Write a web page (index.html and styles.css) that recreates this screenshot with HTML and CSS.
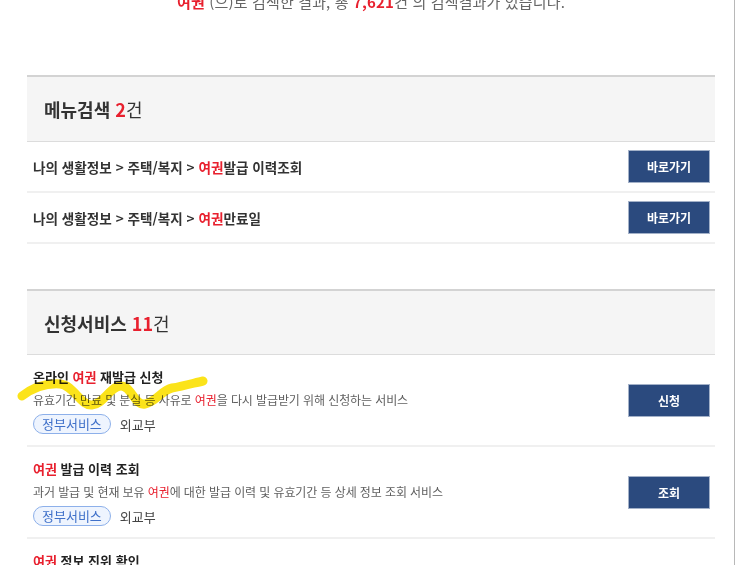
FILE: index.html
```html
<!DOCTYPE html>
<html lang="ko">
<head>
<meta charset="utf-8">
<title>검색결과</title>
<link rel="stylesheet" href="styles.css">
</head>
<body>
<div class="page">
  <div class="content">
    <p class="summary"><strong class="kw">여권</strong> (으)로 검색한 결과, 총 <strong class="kw">7,621</strong>건 의 검색결과가 있습니다.</p>

    <section class="result result-menu">
      <h2 class="result-head">메뉴검색 <em class="count">2</em><span class="unit">건</span></h2>
      <ul class="menu-list">
        <li class="menu-row">
          <span class="path">나의 생활정보 &gt; 주택/복지 &gt; <span class="kw-soft">여권</span>발급 이력조회</span>
          <a class="btn" href="#">바로가기</a>
        </li>
        <li class="menu-row">
          <span class="path">나의 생활정보 &gt; 주택/복지 &gt; <span class="kw-soft">여권</span>만료일</span>
          <a class="btn" href="#">바로가기</a>
        </li>
      </ul>
    </section>

    <section class="result result-svc">
      <h2 class="result-head">신청서비스 <em class="count">11</em><span class="unit">건</span></h2>
      <ul class="svc-list">
        <li class="svc-item">
          <div class="svc-body">
            <p class="svc-title">온라인 <span class="kw">여권</span> 재발급 신청</p>
            <p class="svc-desc">유효기간 만료 및 분실 등 사유로 <span class="kw-soft">여권</span>을 다시 발급받기 위해 신청하는 서비스</p>
            <div class="svc-meta"><span class="tag">정부서비스</span><span class="org">외교부</span></div>
          </div>
          <a class="btn" href="#">신청</a>
          <svg class="scribble" width="240" height="70" viewBox="0 0 240 70" aria-hidden="true">
            <path d="M22,41 C34,32 46,28 60,29 C74,30 80,51 92,50 C104,49 110,31 121,31 C132,31 134,51 145,49 C156,47 162,35 172,33 C184,31 194,28 203,26" fill="none" stroke="#fbe31a" stroke-width="9" stroke-linecap="round" stroke-linejoin="round"/>
          </svg>
        </li>
        <li class="svc-item">
          <div class="svc-body">
            <p class="svc-title"><span class="kw">여권</span> 발급 이력 조회</p>
            <p class="svc-desc">과거 발급 및 현재 보유 <span class="kw-soft">여권</span>에 대한 발급 이력 및 유효기간 등 상세 정보 조회 서비스</p>
            <div class="svc-meta"><span class="tag">정부서비스</span><span class="org">외교부</span></div>
          </div>
          <a class="btn" href="#">조회</a>
        </li>
        <li class="svc-item">
          <div class="svc-body">
            <p class="svc-title"><span class="kw">여권</span> 정보 진위 확인</p>
            <p class="svc-desc"><span class="kw-soft">여권</span> 정보의 진위 여부를 확인하는 서비스</p>
            <div class="svc-meta"><span class="tag">정부서비스</span><span class="org">외교부</span></div>
          </div>
          <a class="btn" href="#">확인</a>
        </li>
      </ul>
    </section>
  </div>
</div>
</body>
</html>
```
FILE: styles.css
```css
html, body {
  margin: 0;
  padding: 0;
  background: #fff;
}

body {
  font-family: "Noto Sans CJK KR", "Noto Sans", sans-serif;
  color: #333;
  overflow: hidden;
}

.page {
  box-sizing: border-box;
  width: 735px;
  min-height: 565px;
  border-right: 1px solid #b8b8b8;
}

.content {
  width: 688px;
  margin-left: 27px;
}

.summary {
  margin: -8px 0 0;
  height: 20px;
  line-height: 20px;
  font-size: 15px;
  letter-spacing: 0.15px;
  color: #666;
  text-align: center;
}

.kw {
  color: #e8202e;
  font-weight: 700;
}

.kw-soft {
  color: #e8202e;
}

.result {
  margin-top: 45px;
}

.result-menu {
  margin-top: 63px;
}

.result-head {
  margin: 0;
  display: flex;
  align-items: center;
  height: 64px;
  padding-left: 17px;
  background: #f5f5f5;
  border-top: 2px solid #d3d3d3;
  border-bottom: 1px solid #dcdcdc;
  font-size: 18px;
  font-weight: 700;
  color: #333;
}

.result-svc .result-head {
  height: 63px;
}

.count {
  font-style: normal;
  color: #e8202e;
  margin-left: 5px;
}

.unit {
  font-weight: 400;
}

.menu-list,
.svc-list {
  list-style: none;
  margin: 0;
  padding: 0;
}

.menu-row {
  display: flex;
  align-items: center;
  justify-content: space-between;
  padding: 8px 5px 8px 6px;
  border-bottom: 2px solid #f0f0f0;
}

.path {
  font-size: 13.6px;
  font-weight: 700;
  color: #333;
}

.btn {
  box-sizing: border-box;
  flex: none;
  width: 82px;
  height: 33px;
  display: flex;
  align-items: center;
  justify-content: center;
  background: #2b4a7e;
  border: 1px solid #a3b1c8;
  color: #fff;
  font-size: 12px;
  font-weight: 700;
  text-decoration: none;
}

.svc-item {
  position: relative;
  display: flex;
  align-items: center;
  justify-content: space-between;
  padding: 11px 5px 11px 6px;
  border-bottom: 2px solid #f0f0f0;
}

.svc-title {
  margin: 0;
  font-size: 13px;
  line-height: 22px;
  font-weight: 700;
  color: #222;
}

.svc-desc {
  margin: 1px 0 0;
  font-size: 12px;
  line-height: 22px;
  color: #5f5f5f;
  letter-spacing: -0.1px;
}

.svc-meta {
  margin-top: 3px;
  display: flex;
  align-items: center;
  height: 20px;
}

.tag {
  box-sizing: border-box;
  height: 20px;
  line-height: 18px;
  padding: 0 8px;
  border: 1px solid #8db0ea;
  border-radius: 10px;
  background: #eef4fe;
  color: #3f70c9;
  font-size: 13px;
}

.org {
  margin-left: 9px;
  font-size: 13px;
  color: #444;
}

.scribble {
  position: absolute;
  left: -27px;
  top: 0;
  pointer-events: none;
  mix-blend-mode: multiply;
}
```
